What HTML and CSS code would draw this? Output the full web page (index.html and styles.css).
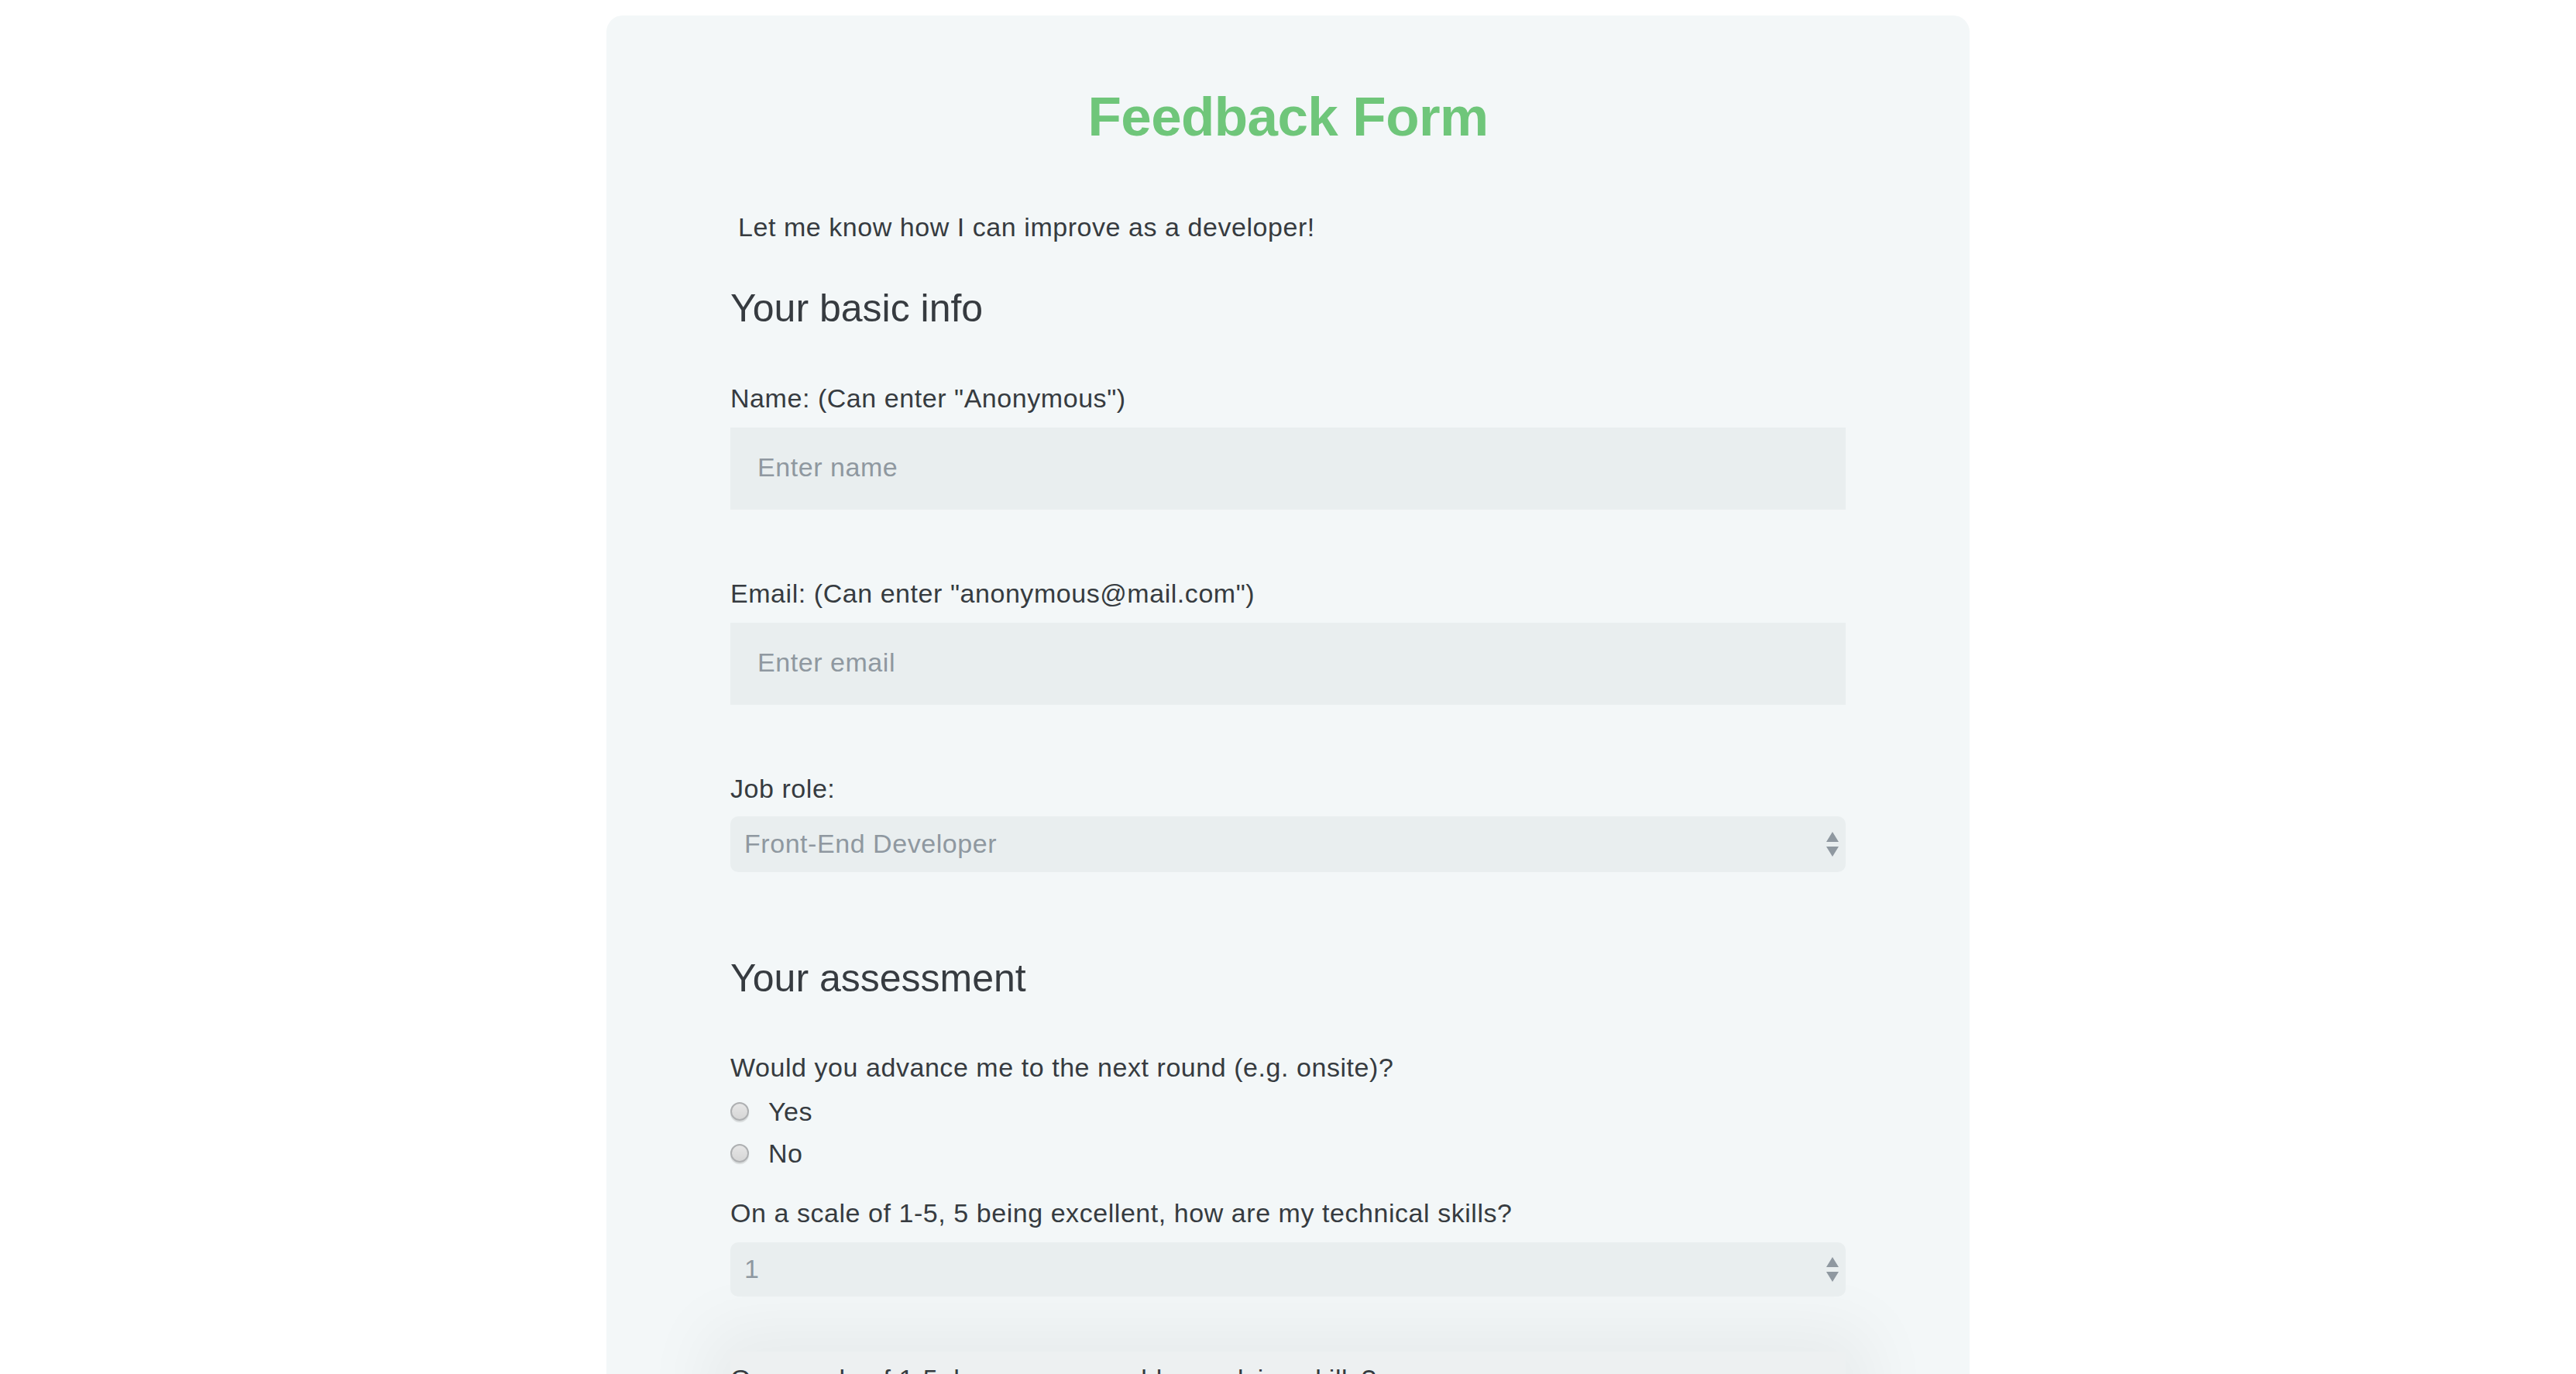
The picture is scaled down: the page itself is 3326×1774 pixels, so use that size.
FILE: index.html
```html
<!DOCTYPE html>
<html lang="en">
<head>
<meta charset="utf-8">
<title>Feedback Form</title>
<link rel="stylesheet" href="styles.css">
</head>
<body>
<main class="card">
  <h1 class="title">Feedback Form</h1>
  <p class="intro">Let me know how I can improve as a developer!</p>

  <h2 class="section">Your basic info</h2>

  <div class="field first">
    <label class="label" for="name">Name: (Can enter "Anonymous")</label>
    <input class="text-input" id="name" type="text" placeholder="Enter name">
  </div>

  <div class="field">
    <label class="label" for="email">Email: (Can enter "anonymous@mail.com")</label>
    <input class="text-input" id="email" type="email" placeholder="Enter email">
  </div>

  <div class="field">
    <label class="label" for="role">Job role:</label>
    <div class="select-wrap">
      <select class="select" id="role">
        <option>Front-End Developer</option>
        <option>Back-End Developer</option>
        <option>Full-Stack Developer</option>
      </select>
      <svg class="arrows" width="16" height="32" viewBox="0 0 16 32"><path d="M8 0 L16 13 L0 13 Z M0 19 L16 19 L8 32 Z" fill="#8f98a0"/></svg>
    </div>
  </div>

  <h2 class="section assessment">Your assessment</h2>

  <div class="question">
    <p class="label">Would you advance me to the next round (e.g. onsite)?</p>
    <div class="radios">
      <label class="radio-row"><input class="radio" type="radio" name="advance"><span>Yes</span></label>
      <label class="radio-row"><input class="radio" type="radio" name="advance"><span>No</span></label>
    </div>
  </div>

  <div class="question scale">
    <label class="label" for="tech">On a scale of 1-5, 5 being excellent, how are my technical skills?</label>
    <div class="select-wrap short">
      <select class="select" id="tech">
        <option>1</option><option>2</option><option>3</option><option>4</option><option>5</option>
      </select>
      <svg class="arrows" width="16" height="32" viewBox="0 0 16 32"><path d="M8 0 L16 13 L0 13 Z M0 19 L16 19 L8 32 Z" fill="#8f98a0"/></svg>
    </div>
  </div>

  <div class="question next">
    <label class="label" for="soft">On a scale of 1-5, how are my problem-solving skills?</label>
    <div class="select-wrap short">
      <select class="select" id="soft">
        <option>1</option><option>2</option><option>3</option><option>4</option><option>5</option>
      </select>
    </div>
  </div>
</main>
</body>
</html>
```

FILE: styles.css
```css
html, body {
  margin: 0;
  padding: 0;
  background: #ffffff;
}

body {
  font-family: "Liberation Sans", Arial, Helvetica, sans-serif;
  color: #363b40;
  overflow: hidden;
}

.card {
  width: 1760px;
  box-sizing: border-box;
  margin: 20px auto 0;
  padding: 91px 160px 200px;
  background: #f3f7f8;
  border-radius: 21px 21px 0 0;
}

.title {
  margin: 0;
  font-size: 71px;
  line-height: 80px;
  font-weight: 700;
  letter-spacing: -0.6px;
  text-align: center;
  color: #6fc67a;
}

.intro {
  margin: 82px 0 0 10px;
  font-size: 34px;
  line-height: 40px;
  letter-spacing: 0.55px;
}

.section {
  margin: 55px 0 0;
  font-size: 50px;
  line-height: 60px;
  font-weight: 400;
}

.section.assessment {
  margin-top: 107px;
}

.field {
  display: flex;
  flex-direction: column;
  margin-top: 88px;
}

.field.first {
  margin-top: 66px;
}

.label {
  display: block;
  margin: 0;
  font-size: 34px;
  line-height: 40px;
  letter-spacing: 0.55px;
}

.text-input {
  margin-top: 18px;
  height: 106px;
  box-sizing: border-box;
  padding: 0 35px 3px;
  border: none;
  border-radius: 0;
  background: #e9eeef;
  font-family: inherit;
  font-size: 34px;
  letter-spacing: 0.55px;
  color: #363b40;
  outline: none;
}

.text-input::placeholder {
  color: #8f98a0;
}

.select-wrap {
  position: relative;
  margin-top: 16px;
  height: 72px;
}

.select-wrap.short {
  margin-top: 18px;
  height: 70px;
}

.select {
  appearance: none;
  -webkit-appearance: none;
  width: 100%;
  height: 100%;
  box-sizing: border-box;
  padding: 0 18px 2px;
  border: none;
  border-radius: 10px;
  background: #e9eeef;
  font-family: inherit;
  font-size: 34px;
  letter-spacing: 0.55px;
  color: #8f98a0;
  outline: none;
}

.arrows {
  position: absolute;
  right: 9px;
  top: 50%;
  transform: translateY(-50%);
  pointer-events: none;
}

.question {
  margin-top: 65px;
}

.radios {
  display: flex;
  flex-direction: column;
  margin-top: 10px;
}

.radio-row {
  display: flex;
  align-items: center;
  gap: 25px;
  height: 54px;
  font-size: 34px;
  line-height: 54px;
  letter-spacing: 0.55px;
}

.radio {
  appearance: none;
  -webkit-appearance: none;
  margin: 0;
  width: 24px;
  height: 24px;
  box-sizing: border-box;
  border-radius: 50%;
  border: 2px solid #aeb0b2;
  background: linear-gradient(#e6e6e6, #d6d6d6);
  box-shadow: 0 2px 1px rgba(0, 0, 0, 0.12);
}

.question.scale {
  margin-top: 30px;
}

.question.next {
  margin-top: 71px;
  padding-top: 15px;
  background: #edf0f1;
  box-shadow: 0 0 90px 30px rgba(0, 0, 0, 0.05);
}
```
